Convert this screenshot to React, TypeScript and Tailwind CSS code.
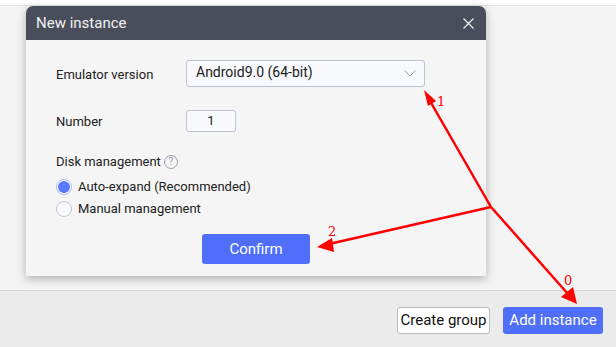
import React from "react";

export default function App() {
  return (
    <div
      className="relative w-[616px] h-[347px] overflow-hidden bg-[#f4f4f4] flex flex-col"
      style={{ fontFamily: "Roboto, 'Noto Sans', sans-serif" }}
    >
      <div className="h-[6px] bg-white border-b border-[#e2e2e2] shrink-0" />
      <div className="flex-1" />
      <div className="h-[57px] shrink-0 bg-[#ebebeb] border-t border-[#d9d9d9] flex items-start justify-end gap-[13px] pr-[13px] pt-[16px]">
        <button className="h-[27px] w-[93px] bg-white border border-[#b9b9c6] rounded-[3px] text-[15px] text-[#111] leading-none">
          Create group
        </button>
        <button className="h-[27px] w-[100px] bg-[#4f6ffa] rounded-[3px] text-[15px] text-white leading-none">
          Add instance
        </button>
      </div>

      {/* Dialog */}
      <div className="absolute left-[26px] top-[6px] w-[460px] h-[270px] bg-[#f5f5f5] rounded-t-[7px] shadow-[0_3px_10px_rgba(0,0,0,0.28)] flex flex-col">
        <div className="h-[34px] bg-[#4a4d5c] rounded-t-[7px] flex items-center justify-between pl-[10px] pr-[12px]">
          <span className="text-[15px] text-[#f2f2f2]">New instance</span>
          <svg width="11" height="11" viewBox="0 0 11 11" className="mt-[1px]">
            <path d="M0.5 0.5 L10.5 10.5 M10.5 0.5 L0.5 10.5" stroke="#f0f0f0" strokeWidth="1.2" />
          </svg>
        </div>
        <div className="flex flex-col pl-[30px] pt-[20px]">
          <div className="flex items-center h-[27px]">
            <span className="w-[130px] text-[13px] text-[#222] mt-[3px]">Emulator version</span>
            <div className="w-[239px] h-[27px] bg-[#f8f9fd] border border-[#bfc2d0] rounded-[3px] flex items-center justify-between pl-[9px] pr-[8px]">
              <span className="text-[14px] text-[#222] mb-[2px]">Android9.0 (64-bit)</span>
              <svg width="12" height="7" viewBox="0 0 12 7">
                <path d="M0.5 0.5 L6 6 L11.5 0.5" fill="none" stroke="#9a9aa6" strokeWidth="1" />
              </svg>
            </div>
          </div>
          <div className="flex items-center h-[22px] mt-[23px]">
            <span className="w-[130px] text-[13px] text-[#222] mt-[1px]">Number</span>
            <div className="w-[50px] h-[22px] bg-[#f8f9fd] border border-[#bfc2d0] rounded-[3px] flex items-center justify-center text-[13px] text-[#222]">
              1
            </div>
          </div>
          <div className="flex items-center mt-[20px] h-[20px]">
            <span className="text-[13px] text-[#222]">Disk management</span>
            <span className="ml-[3px] w-[14px] h-[14px] rounded-full border border-[#9da0b3] flex items-center justify-center text-[10px] text-[#9da0b3] leading-none">
              ?
            </span>
          </div>
          <div className="flex items-center mt-[5px] h-[20px]">
            <span className="w-[16px] h-[16px] rounded-full border border-[#a9b6ff] bg-white flex items-center justify-center">
              <span className="w-[12px] h-[12px] rounded-full bg-[#5a78fd]" />
            </span>
            <span className="ml-[6px] text-[13px] text-[#222]">Auto-expand (Recommended)</span>
          </div>
          <div className="flex items-center mt-[2px] h-[20px]">
            <span className="w-[16px] h-[16px] rounded-full border border-[#c4c6d2] bg-[#fbfbff]" />
            <span className="ml-[6px] text-[13px] text-[#222]">Manual management</span>
          </div>
          <div className="flex justify-start mt-[15px] pl-[146px]">
            <button className="w-[108px] h-[30px] bg-[#4f6ffa] rounded-[3px] text-[15px] text-white">
              Confirm
            </button>
          </div>
        </div>
      </div>

      {/* Annotation arrows overlay */}
      <svg className="absolute left-0 top-0 pointer-events-none" width="616" height="347" viewBox="0 0 616 347">
        <g stroke="#ff0000" strokeWidth="2.5" fill="none">
          <line x1="491" y1="207" x2="430" y2="101" />
          <line x1="491" y1="207" x2="329" y2="244" />
          <line x1="491" y1="207" x2="568" y2="294" />
        </g>
        <g fill="#ff0000">
          <polygon points="424,90 436,101 428,106" />
          <polygon points="317,247 332,238 334,252" />
          <polygon points="577,304 561,297 573,287" />
        </g>
        <g fill="#ff0000" fontFamily="'DejaVu Serif', serif" fontSize="13">
          <text x="437" y="106">1</text>
          <text x="328" y="236">2</text>
          <text x="564" y="285">0</text>
        </g>
      </svg>
    </div>
  );
}
